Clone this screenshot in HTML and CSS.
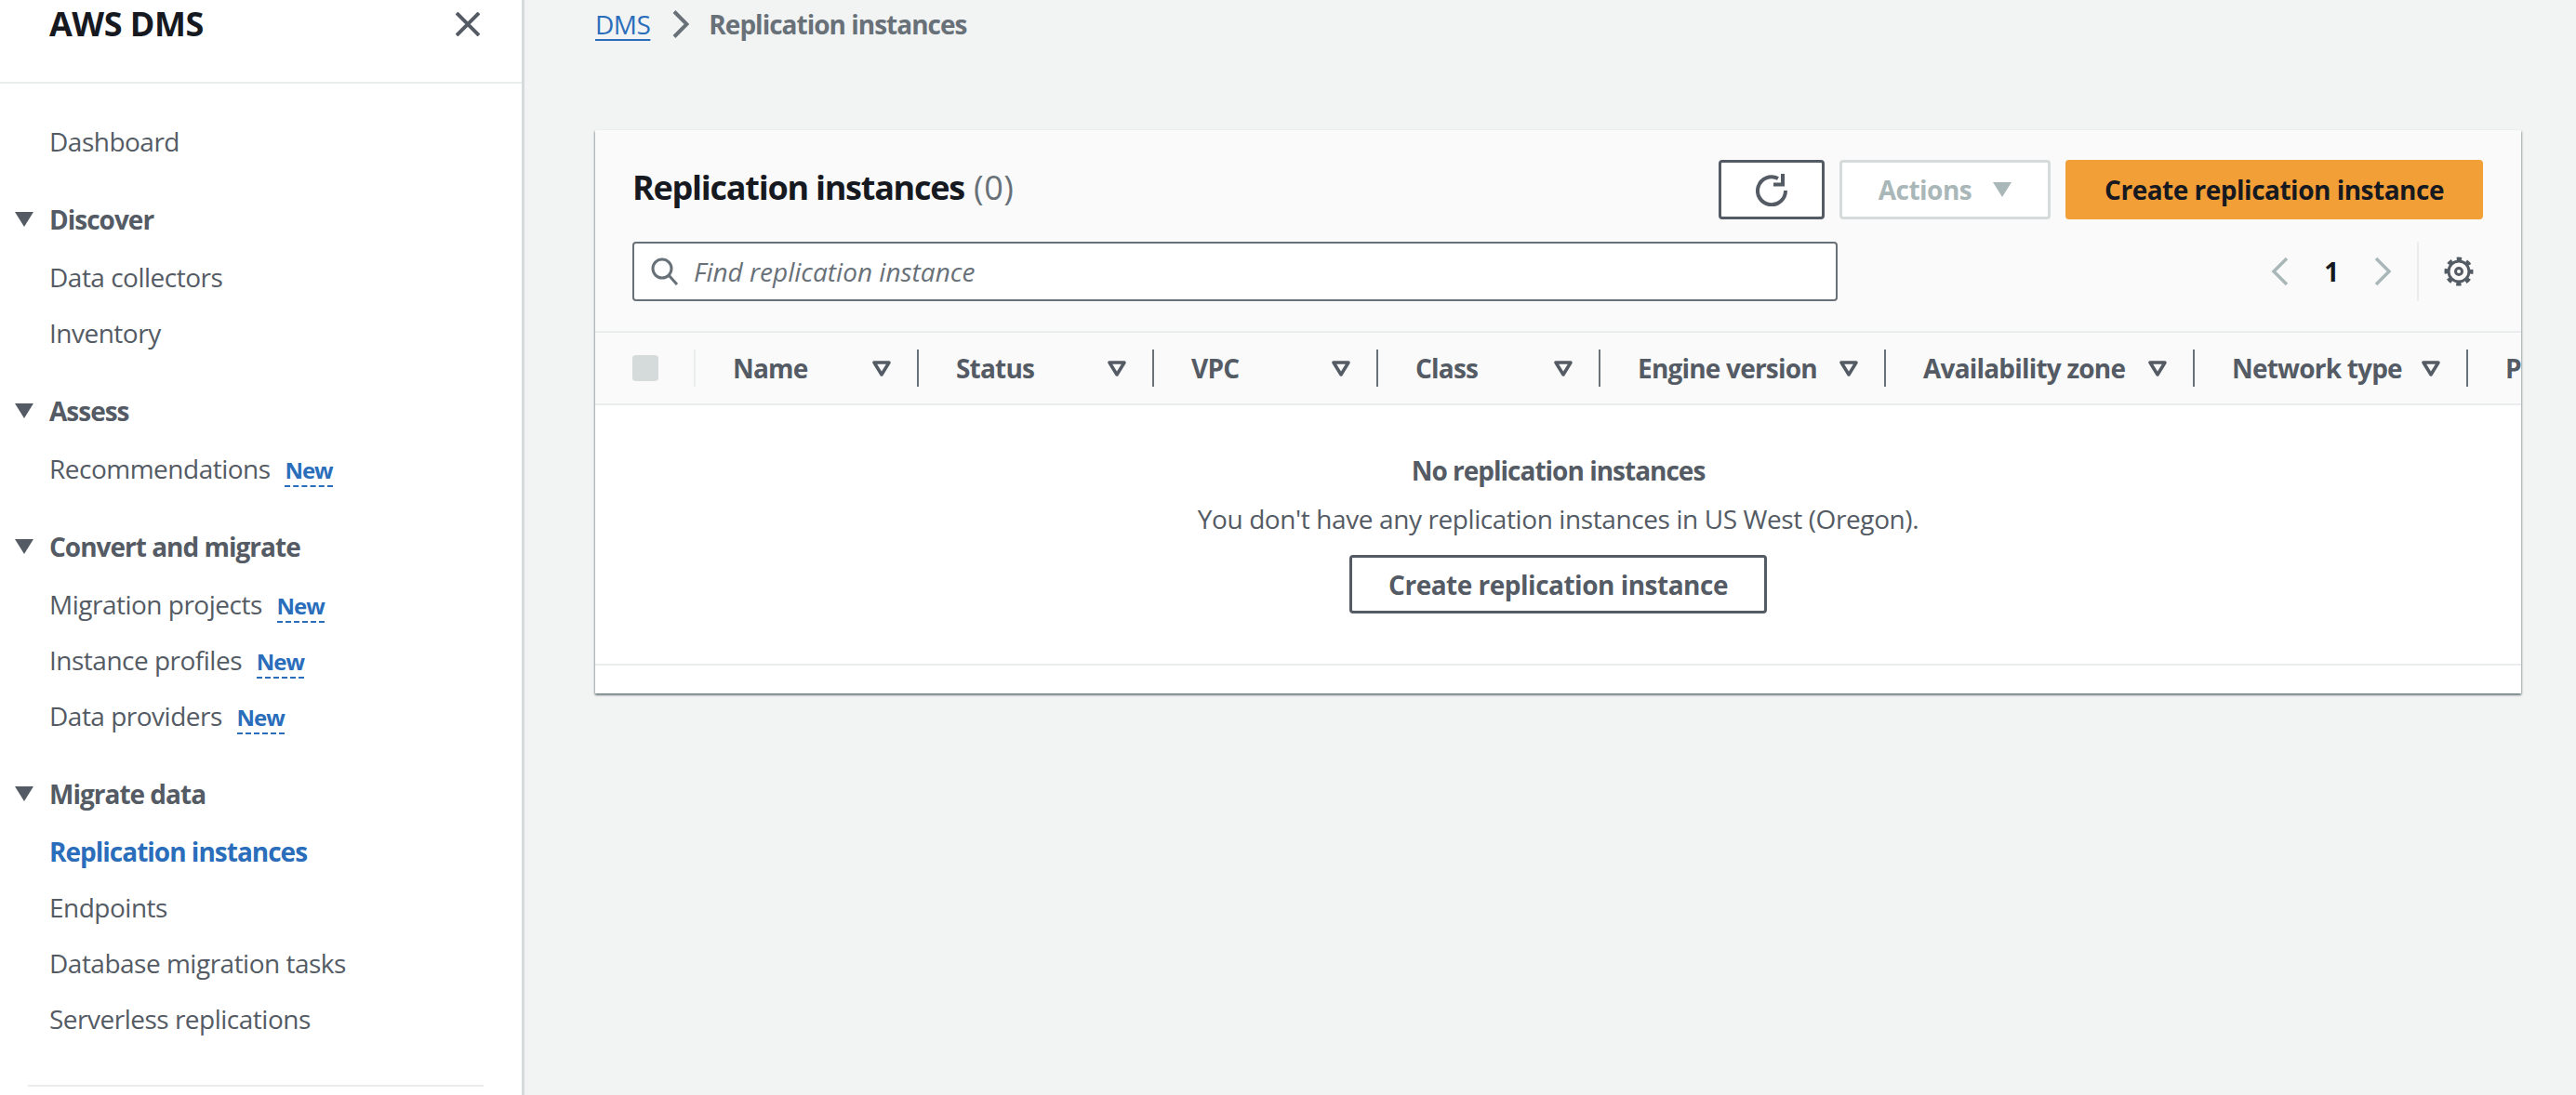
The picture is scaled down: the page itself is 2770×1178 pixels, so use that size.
FILE: index.html
```html
<!DOCTYPE html>
<html lang="en">
  <head>
    <meta charset="UTF-8" />
    <title>Replication instances</title>
    <link rel="stylesheet" href="styles.css">
  </head>
  <body>
    <aside class="sidebar">
      <div class="sidebar-head">
        <h2>AWS DMS</h2>
        <svg class="close-icon" viewBox="0 0 26 26"><path d="M1 1l24 24M25 1L1 25" /></svg>
      </div>
      <nav class="nav">
        <a class="nav-item">Dashboard</a>

        <div class="nav-section">
          <div class="nav-title"><svg class="caret" viewBox="0 0 20 16"><path d="M0 0h20L10 16z" /></svg>Discover</div>
          <a class="nav-item">Data collectors</a>
          <a class="nav-item">Inventory</a>
        </div>

        <div class="nav-section">
          <div class="nav-title"><svg class="caret" viewBox="0 0 20 16"><path d="M0 0h20L10 16z" /></svg>Assess</div>
          <a class="nav-item">Recommendations <span class="new-tag">New</span></a>
        </div>

        <div class="nav-section">
          <div class="nav-title"><svg class="caret" viewBox="0 0 20 16"><path d="M0 0h20L10 16z" /></svg>Convert and migrate</div>
          <a class="nav-item">Migration projects <span class="new-tag">New</span></a>
          <a class="nav-item">Instance profiles <span class="new-tag">New</span></a>
          <a class="nav-item">Data providers <span class="new-tag">New</span></a>
        </div>

        <div class="nav-section">
          <div class="nav-title"><svg class="caret" viewBox="0 0 20 16"><path d="M0 0h20L10 16z" /></svg>Migrate data</div>
          <a class="nav-item active">Replication instances</a>
          <a class="nav-item">Endpoints</a>
          <a class="nav-item">Database migration tasks</a>
          <a class="nav-item">Serverless replications</a>
        </div>
      </nav>
      <div class="nav-divider"></div>
    </aside>

    <main class="content">
      <div class="breadcrumb">
        <a class="crumb-link">DMS</a>
        <svg class="crumb-sep" viewBox="0 0 18 30"><path d="M2 1.5L15.5 15 2 28.5" /></svg>
        <span class="crumb-current">Replication instances</span>
      </div>

      <section class="card">
        <div class="card-head">
          <div class="head-row">
            <h1 class="card-title">Replication instances <span class="count">(0)</span></h1>
            <div class="actions">
              <button class="btn btn-icon">
                <svg class="refresh-icon" viewBox="0 0 35 35"><path d="M32 18A15 15 0 1 1 24 5" /><path d="M19 11.5H29V0" /></svg>
              </button>
              <button class="btn btn-disabled">Actions <svg class="caret-small" viewBox="0 0 20 16"><path d="M0 0h20L10 16z" /></svg></button>
              <button class="btn btn-primary">Create replication instance</button>
            </div>
          </div>
          <div class="head-row search-row">
            <div class="search">
              <svg class="search-icon" viewBox="0 0 30 30"><circle cx="12" cy="12" r="10" /><path d="M19 19l9 10" /></svg>
              <span class="placeholder">Find replication instance</span>
            </div>
            <div class="pager">
              <svg class="pager-arrow" viewBox="0 0 20 32"><path d="M17 2L3 16l14 14" /></svg>
              <span class="page-num">1</span>
              <svg class="pager-arrow" viewBox="0 0 20 32"><path d="M3 2l14 14L3 30" /></svg>
              <span class="pager-sep"></span>
              <svg class="gear-icon" viewBox="0 0 32 32">
                <circle class="gear-ring" cx="16" cy="16" r="11" />
                <circle class="gear-teeth" cx="16" cy="16" r="13.5" />
                <circle class="gear-ring" cx="16" cy="16" r="3.5" />
              </svg>
            </div>
          </div>
        </div>

        <div class="table-head">
          <div class="col col-check"><span class="checkbox"></span></div>
          <div class="col">Name <svg class="sort" viewBox="0 0 20 17"><path d="M2 2h16l-8 13z" /></svg></div>
          <div class="col">Status <svg class="sort" viewBox="0 0 20 17"><path d="M2 2h16l-8 13z" /></svg></div>
          <div class="col">VPC <svg class="sort" viewBox="0 0 20 17"><path d="M2 2h16l-8 13z" /></svg></div>
          <div class="col">Class <svg class="sort" viewBox="0 0 20 17"><path d="M2 2h16l-8 13z" /></svg></div>
          <div class="col">Engine version <svg class="sort" viewBox="0 0 20 17"><path d="M2 2h16l-8 13z" /></svg></div>
          <div class="col">Availability zone <svg class="sort" viewBox="0 0 20 17"><path d="M2 2h16l-8 13z" /></svg></div>
          <div class="col">Network type <svg class="sort" viewBox="0 0 20 17"><path d="M2 2h16l-8 13z" /></svg></div>
          <div class="col col-last">P</div>
        </div>

        <div class="empty">
          <b class="empty-title">No replication instances</b>
          <p class="empty-text">You don't have any replication instances in US West (Oregon).</p>
          <button class="btn btn-normal">Create replication instance</button>
        </div>
        <div class="card-foot"></div>
      </section>
    </main>
  </body>
</html>
```

FILE: styles.css
```css
* {
  box-sizing: border-box;
}
html, body {
  margin: 0;
  height: 100%;
}
body {
  display: flex;
  overflow: hidden;
  font-family: "Open Sans", sans-serif;
  font-size: 28px;
  letter-spacing: -0.5px;
  color: #545b64;
  background-color: #f2f3f3;
}

/* sidebar */
.sidebar {
  flex: 0 0 564px;
  background-color: white;
  border-right: 3px solid #d5dbdb;
}
.sidebar-head {
  display: flex;
  justify-content: space-between;
  padding: 0 45px 36px 53px;
  border-bottom: 2px solid #eaeded;
}
.sidebar-head h2 {
  margin: 0;
  font-size: 36px;
  line-height: 52px;
  color: #16191f;
}
.close-icon {
  width: 26px;
  height: 26px;
  margin-top: 13px;
  fill: none;
  stroke: #545b64;
  stroke-width: 4;
}
.nav {
  padding-top: 32px;
}
.nav-item {
  display: block;
  height: 60px;
  padding-left: 53px;
  line-height: 60px;
}
.nav-item.active {
  font-weight: 700;
  letter-spacing: -1px;
  color: #2a6ebb;
}
.nav-section {
  margin-top: 24px;
}
.nav-title {
  display: flex;
  align-items: center;
  gap: 17px;
  height: 60px;
  margin-bottom: 2px;
  padding-left: 16px;
  font-weight: 700;
  letter-spacing: -1px;
}
.caret {
  width: 20px;
  height: 16px;
  fill: #545b64;
}
.new-tag {
  margin-left: 9px;
  font-size: 24px;
  font-weight: 700;
  letter-spacing: -1px;
  color: #2a6ebb;
  border-bottom: 2px dashed #2a6ebb;
}
.nav-divider {
  height: 2px;
  margin: 41px 41px 0 30px;
  background-color: #eaeded;
}

/* main area */
.content {
  flex: 1;
  min-width: 0;
  padding-left: 76px;
}
.breadcrumb {
  display: flex;
  align-items: center;
  gap: 24px;
  height: 52px;
}
.crumb-link {
  color: #2a6ebb;
  text-decoration: underline;
  text-decoration-thickness: 2px;
  text-underline-offset: 5px;
}
.crumb-sep {
  width: 18px;
  height: 30px;
  fill: none;
  stroke: #687078;
  stroke-width: 4;
}
.crumb-current {
  margin-left: -3px;
  font-weight: 700;
  letter-spacing: -1px;
  color: #687078;
}
.card {
  width: 2071px;
  margin-top: 88px;
  overflow: hidden;
  background-color: white;
  box-shadow: 0 2px 2px rgba(0, 28, 36, 0.4), 1px 1px 2px rgba(0, 28, 36, 0.2), -1px 1px 2px rgba(0, 28, 36, 0.2);
}
.card-head {
  padding: 32px 41px 32px 40px;
  background-color: #fafafa;
  border-bottom: 2px solid #eaeded;
}
.head-row {
  display: flex;
  align-items: center;
  justify-content: space-between;
}
.search-row {
  margin-top: 24px;
}
.card-title {
  margin: 0 0 5px;
  font-size: 36px;
  letter-spacing: -1.25px;
  color: #16191f;
}
.count {
  margin-left: 2px;
  font-weight: 400;
  letter-spacing: 0.5px;
  color: #687078;
}
.actions {
  display: flex;
  gap: 16px;
}

/* buttons */
.btn {
  display: flex;
  align-items: center;
  justify-content: center;
  height: 64px;
  border: 3px solid #545b64;
  border-radius: 4px;
  background-color: white;
  font-family: inherit;
  font-size: 28px;
  font-weight: 700;
  letter-spacing: inherit;
  color: #545b64;
}
.btn-icon {
  width: 114px;
}
.refresh-icon {
  width: 35px;
  height: 35px;
  fill: none;
  stroke: #545b64;
  stroke-width: 4;
}
.btn-disabled {
  width: 227px;
  gap: 23px;
  color: #aab7b8;
  border-color: #d5dbdb;
}
.caret-small {
  width: 20px;
  height: 16px;
  fill: #aab7b8;
}
.btn-primary {
  width: 449px;
  color: #16191f;
  background-color: #f39f37;
  border-color: #f39f37;
}
.btn-normal {
  width: 449px;
  height: 63px;
}

/* search and pagination */
.search {
  display: flex;
  align-items: center;
  gap: 16px;
  width: 1296px;
  height: 64px;
  padding-left: 18px;
  background-color: white;
  border: 2px solid #687078;
  border-radius: 4px;
}
.search-icon {
  width: 30px;
  height: 30px;
  fill: none;
  stroke: #687078;
  stroke-width: 3;
}
.placeholder {
  font-style: italic;
  letter-spacing: 0;
  color: #687078;
}
.pager {
  display: flex;
  align-items: center;
  height: 64px;
  margin-right: 10px;
}
.pager-arrow {
  width: 20px;
  height: 32px;
  fill: none;
  stroke: #aab7b8;
  stroke-width: 3.5;
}
.page-num {
  width: 90px;
  text-align: center;
  font-weight: 700;
  color: #16191f;
}
.pager-sep {
  width: 2px;
  height: 64px;
  margin: 0 27px;
  background-color: #eaeded;
}
.gear-icon {
  width: 32px;
  height: 32px;
  fill: none;
  stroke: #545b64;
}
.gear-ring {
  stroke-width: 3;
}
.gear-teeth {
  stroke-width: 4;
  stroke-dasharray: 5.3 5.3;
  stroke-dashoffset: 2.65;
}

/* table header */
.table-head {
  display: grid;
  grid-template-columns: 108px 240px 253px 241px 239px 307px 332px 294px 100px;
  align-items: center;
  height: 78px;
  background-color: #fafafa;
  border-bottom: 2px solid #eaeded;
  font-weight: 700;
  letter-spacing: -0.8px;
}
.col {
  display: flex;
  align-items: center;
  justify-content: space-between;
  height: 40px;
  padding: 0 28px 0 40px;
  white-space: nowrap;
  border-right: 2px solid #687078;
}
.col-check {
  border-right-color: #eaeded;
}
.col-last {
  border-right: none;
}
.checkbox {
  width: 28px;
  height: 28px;
  background-color: #d5dbdb;
  border-radius: 4px;
}
.sort {
  flex: none;
  width: 20px;
  height: 17px;
  fill: none;
  stroke: #545b64;
  stroke-width: 3.5;
  stroke-linejoin: round;
}

/* empty state */
.empty {
  display: flex;
  flex-direction: column;
  align-items: center;
  height: 280px;
  padding-top: 49px;
  border-bottom: 2px solid #eaeded;
}
.empty-title {
  line-height: 42px;
  letter-spacing: -1px;
}
.empty-text {
  margin: 10px 0 18px;
  line-height: 42px;
  letter-spacing: -0.4px;
}
.card-foot {
  height: 30px;
}
```
